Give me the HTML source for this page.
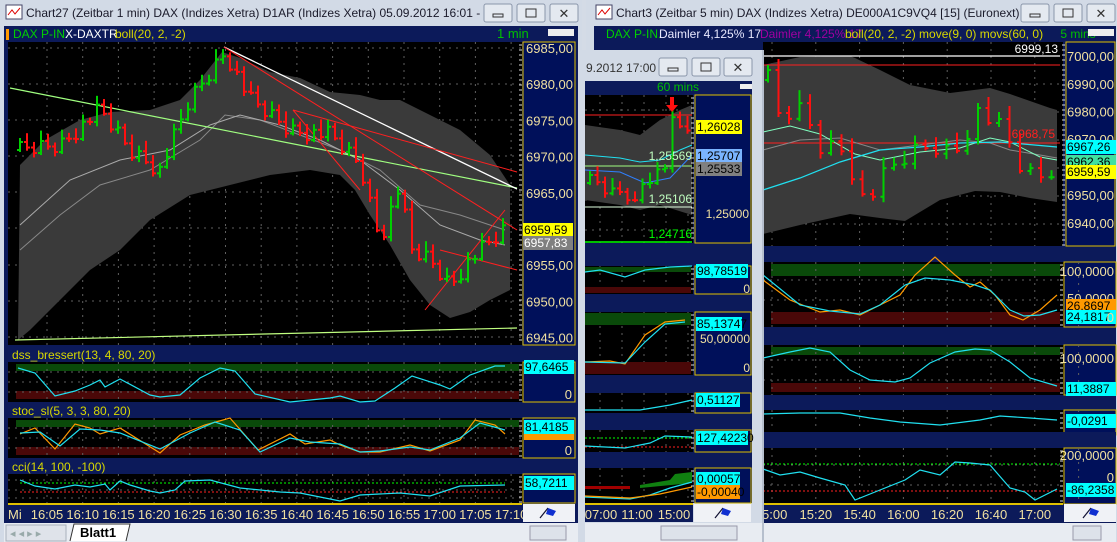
<!DOCTYPE html>
<html><head><meta charset="utf-8"><style>
html,body{margin:0;padding:0;background:#d4dbe6;width:1117px;height:542px;overflow:hidden}
svg{display:block}
text{font-family:"Liberation Sans",sans-serif}
</style></head><body>
<svg id="s" width="1117" height="542" xmlns="http://www.w3.org/2000/svg"></svg>
<script>
var o='';
function R(x,y,w,h,f,extra){o+='<rect x="'+x+'" y="'+y+'" width="'+w+'" height="'+h+'" fill="'+f+'" '+(extra||'')+'/>';}
function T(x,y,t,c,s,a){o+='<text x="'+x+'" y="'+y+'" fill="'+c+'" font-size="'+(s||12)+'"'+(a?' text-anchor="'+a+'"':'')+'>'+t+'</text>';}
function P(pts,c,w,extra){o+='<polyline fill="none" stroke="'+c+'" stroke-width="'+(w||1)+'" points="'+pts.map(function(p){return p.join(',')}).join(' ')+'" '+(extra||'')+'/>';}
function G(pts,f){o+='<polygon fill="'+f+'" points="'+pts.map(function(p){return p.join(',')}).join(' ')+'"/>';}
function Ln(x1,y1,x2,y2,c,w,extra){o+='<line x1="'+x1+'" y1="'+y1+'" x2="'+x2+'" y2="'+y2+'" stroke="'+c+'" stroke-width="'+(w||1)+'" '+(extra||'')+'/>';}
function interp(k,x){for(var i=0;i<k.length-1;i++){if(x>=k[i][0]&&x<=k[i+1][0]){var t=(x-k[i][0])/(k[i+1][0]-k[i][0]);return k[i][1]+t*(k[i+1][1]-k[i][1]);}}return k[k.length-1][1];}
function candles(k,x0,x1,step,amp){var prev=interp(k,x0);var n=0;for(var x=x0;x<=x1;x+=step){var c=interp(k,x)+((n*37)%11-5)*amp*0.4;var col=c<prev?'#00d000':'#ff1010';var hi=Math.min(c,prev)-amp*(1+(n*13)%5*0.4),lo=Math.max(c,prev)+amp*(0.5+(n*7)%3*0.3);Ln(x,hi,x,lo,col,2);Ln(x-3,prev,x,prev,col,2);Ln(x,c,x+3,c,col,2);prev=c;n++;}}
function title(x,w,y,txt){R(x,y,w,25,'#d2dae6');T(x+26,y+17,txt,'#1a1a2a',12);
 o+='<g><rect x="'+(x+6)+'" y="'+(y+5)+'" width="16" height="14" fill="#fff" stroke="#446" /><polyline points="'+(x+8)+','+(y+15)+' '+(x+12)+','+(y+10)+' '+(x+15)+','+(y+14)+' '+(x+20)+','+(y+8)+'" stroke="#d00" fill="none"/></g>';
 var bx=[x+w-96,x+w-63,x+w-30];for(var i=0;i<3;i++){R(bx[i],y+4,28,18,'#e4e9f0','stroke="#8a96aa" rx="2"');}
 R(bx[0]+9,y+14,10,3,'none','stroke="#333"');R(bx[1]+9,y+9,10,8,'none','stroke="#333"');T(bx[2]+14,y+18,'✕','#333',13,'middle');}
function grid(x0,x1,y0,y1,xs,ys){for(var i=0;i<xs.length;i++)Ln(xs[i],y0,xs[i],y1,'#606060',1,'stroke-dasharray="2,5"');for(var j=0;j<ys.length;j++)Ln(x0,ys[j],x1,ys[j],'#606060',1,'stroke-dasharray="2,5"');}
function axis(x,y,w,h){R(x,y,w,h,'#00105a','stroke="#e0c000" stroke-width="1"');for(var yy=y+3;yy<y+h;yy+=5)Ln(x-4,yy,x-1,yy,'#ddd');}
function lbl(x,y,w,t,bg,c){R(x,y-11,w,14,bg);T(x+1,y,t,c||'#000',12);}
var NAV='#0c1a5a',BG='#000';

/* ===== LEFT WINDOW ===== */
R(0,0,582,542,'#d2dae6');
title(0,580,0,'Chart27 (Zeitbar 1 min)  DAX (Indizes Xetra) D1AR (Indizes Xetra) 05.09.2012 16:01 - 0...');
R(4,26,574,497,NAV);
R(6,29,3,11,'#ff9900');
T(13,38,'DAX P-IN.','#00d000',12);T(65,38,'X-DAXTR','#ffffff',12);T(115,38,'boll(20, 2, -2)','#d8d800',12);T(497,38,'1 min','#00c000',13);
R(548,29,26,7,'#eee');
R(8,42,514,303,BG);
var lx=[];for(var t=0;t<14;t++)lx.push(47+t*35.7);
grid(8,522,42,345,lx,[48,84,120,156,192,228,265,301,337]);
G([[20,165],[45,140],[80,120],[110,112],[150,110],[180,100],[200,80],[222,52],[240,58],[270,72],[300,78],[330,92],[360,95],[380,100],[400,100],[430,115],[460,130],[490,155],[510,185],[510,290],[490,300],[470,312],[450,318],[430,305],[410,280],[390,245],[370,215],[355,190],[340,175],[310,170],[270,175],[230,185],[190,195],[150,220],[120,250],[90,270],[60,300],[30,330],[18,340]],'#3a3a3a');
P([[20,250],[60,215],[100,185],[150,170],[200,140],[225,115],[260,120],[300,135],[340,150],[380,170],[420,205],[460,215],[505,230]],'#888',1);
P([[20,225],[70,180],[120,160],[170,150],[210,125],[240,115],[280,125],[320,140],[360,160],[400,190],[440,225],[480,240],[505,245]],'#aaa',1);
Ln(10,88,517,188,'#a0ff80',1.2);
Ln(224,47,517,189,'#ffffff',1.3);
Ln(224,47,517,230,'#ff2020',1);Ln(293,110,517,172,'#ff2020',1);Ln(293,110,360,190,'#ff2020',1);
Ln(425,310,505,210,'#ff2020',1);Ln(440,250,517,270,'#ff2020',1);
Ln(15,340,517,328,'#c0ff80',1.2);
candles([[20,150],[60,145],[100,110],[130,150],[160,170],[190,100],[225,52],[250,100],[290,130],[330,135],[360,165],[380,240],[400,185],[410,250],[430,260],[450,285],[470,260],[505,230]],20,505,7,4);
axis(523,42,52,303);
var lp=['6985,00','6980,00','6975,00','6970,00','6965,00','6960,00','6955,00','6950,00','6945,00'];
for(var i=0;i<9;i++)if(i!=5)T(573,53+i*36.2,lp[i],'#f0e0a0',13,'end');
lbl(523,234,50,'6959,59','#ffff00');lbl(523,247,50,'6957,83','#808080','#fff');
function sub(x0,x1,ax,yh,yp,h,name,bands){R(x0,yh,ax+52-x0,yp-yh,NAV);if(name)T(x0+4,yh+12,name,'#d8d800',12);R(x0,yp,ax-x0,h,BG);if(bands){R(x0+8,yp+2,ax-x0-12,bands[0],'#0a4a0a');R(x0+8,yp+h-bands[1]-3,ax-x0-12,bands[1],'#4a0808');}axis(ax,yp,52,h);}
sub(8,522,523,347,362,40,'dss_bressert(13, 4, 80, 20)',[7,8]);
grid(8,522,362,402,lx,[372,382,392]);
P([[18,368],[35,373],[55,396],[75,391],[90,385],[100,380],[105,387],[120,379],[150,395],[160,397],[180,395],[200,378],[220,368],[235,371],[255,394],[290,402],[330,398],[340,396],[360,402],[375,401],[395,388],[412,376],[440,385],[450,389],[470,375],[495,366],[505,366]],'#20e0f0',1.2);
lbl(524,371,50,'97,6465','#00ffff');T(572,399,'0','#f0e0a0',13,'end');
sub(8,522,523,403,418,40,'stoc_sl(5, 3, 3, 80, 20)',[7,8]);
grid(8,522,418,458,lx,[428,438,448]);
P([[20,434],[35,428],[55,449],[75,424],[90,428],[100,434],[120,428],[160,453],[180,435],[205,425],[230,418],[258,450],[290,434],[305,444],[330,440],[340,445],[360,452],[380,452],[410,445],[430,451],[460,440],[475,420],[495,425],[505,434]],'#ff9900',1.2);
P([[20,433],[40,432],[60,446],[80,429],[100,430],[120,433],[160,449],[190,433],[215,422],[240,430],[260,452],[290,438],[310,442],[340,444],[360,452],[380,451],[410,447],[430,450],[460,438],[480,423],[505,430]],'#20e0f0',1.2);
R(524,432,50,8,'#ff9900');lbl(524,431,50,'81,4185','#00ffff');T(572,455,'0','#f0e0a0',13,'end');
sub(8,522,523,459,474,29,'cci(14, 100, -100)',null);
grid(8,522,474,503,lx,[480,490,498]);
Ln(20,483,505,483,'#00ff00',1,'stroke-dasharray="2,2"');Ln(20,492,505,492,'#ff2020',1,'stroke-dasharray="2,2"');
P([[20,480],[35,486],[55,489],[75,485],[90,487],[105,484],[110,490],[120,481],[130,485],[150,491],[160,493],[175,490],[185,481],[210,480],[240,488],[280,492],[300,493],[320,497],[340,501],[360,495],[400,493],[430,496],[460,486],[505,485]],'#20e0f0',1.2);
lbl(524,487,50,'58,7211','#00ffff');
R(8,504,514,18,NAV);Ln(8,504,522,504,'#e0c000',2);
T(8,519,'Mi','#f0e0a0',13);var lt=['16:05','16:10','16:15','16:20','16:25','16:30','16:35','16:40','16:45','16:50','16:55','17:00','17:05','17:10'];
for(i=0;i<14;i++)T(lx[i],519,lt[i],'#f0e0a0',13,'middle');
R(523,504,52,18,'#f0f2f6');
function flag(x,y){Ln(x,y+10,x+8,y,'#113',1.2);G([[x+8,y],[x+16,y+3],[x+13,y+8],[x+6,y+6]],'#1030d0');}
flag(540,508);
R(4,523,574,19,'#e8ecf2');R(6,525,60,16,'#dfe3ea','stroke="#a8b0bc"');T(10,537,'◂ ◂ ▸ ▸','#9aa',11);
G([[70,541],[74,524],[130,524],[126,541]],'#fff');o+='<polyline points="70,541 74,524 130,524 126,541" fill="none" stroke="#333"/>';
o+='<text x="80" y="537" font-size="13" font-weight="bold" fill="#000" font-family="Liberation Sans">Blatt1</text>';
R(530,526,36,14,'#dde2ea','stroke="#99a"');

/* ===== RIGHT WINDOW ===== */
R(586,0,531,542,'#d2dae6');
title(590,527,0,'Chart3 (Zeitbar 5 min)  DAX (Indizes Xetra) DE000A1C9VQ4 [15] (Euronext)...');
R(594,26,522,497,NAV);
T(606,38,'DAX P-IN.','#00d000',12);T(659,38,'Daimler  4,125% 17','#e8e8ff',12);T(760,38,'Daimler  4,125% 17','#a000a0',12);T(845,38,'boll(20, 2, -2) move(9, 0) movs(60, 0)','#d8d800',12);T(1078,38,'5 mins','#00c000',12,'middle');
R(1088,29,26,7,'#eee');
R(763,42,300,204,BG);
var rx=[];for(t=0;t<9;t++)rx.push(772+t*43.8);
grid(763,1063,42,246,rx,[56,84,112,140,168,196,224]);
G([[763,65],[800,57],[850,56],[855,58],[880,70],[910,85],[950,93],[990,88],[1010,94],[1050,108],[1057,110],[1057,202],[1030,198],[1000,192],[975,191],[940,200],[905,221],[880,218],[850,214],[800,225],[763,234]],'#3a3a3a');
Ln(763,56,1060,56,'#fff',1.3);Ln(763,65,1060,65,'#ff2020',1);Ln(763,143,1060,143,'#ff2020',1);
T(1058,53,'6999,13','#fff',12,'end');T(1055,138,'6968,75','#ff2020',12,'end');
P([[763,150],[800,140],[840,138],[880,150],[920,145],[960,140],[990,143],[1010,150],[1040,155],[1057,158]],'#888',1);
P([[763,132],[790,126],[820,134],[855,154],[880,160],[920,152],[960,148],[990,138],[1010,142],[1040,157],[1057,160]],'#80ffc0',1);
P([[763,190],[800,178],[840,162],[880,150],[920,147],[960,143],[1000,142],[1057,147]],'#20e0f0',1.2);
candles([[768,80],[780,120],[795,108],[805,115],[820,145],[845,150],[865,205],[880,182],[900,160],[920,150],[935,145],[945,152],[960,148],[975,110],[990,120],[1000,130],[1010,145],[1025,175],[1040,178],[1057,165]],768,1055,10.5,5);
axis(1066,42,49,204);
var rp=['7000,00','6990,00','6980,00','6970,00','6960,00','6950,00','6940,00'];
for(i=0;i<7;i++)if(i!=4&&i!=3)T(1114,61+i*27.8,rp[i],'#f0e0a0',13,'end');
T(1114,144,'6970,00','#f0e0a0',13,'end');
lbl(1066,151,50,'6967,26','#00ffff');lbl(1066,166,50,'6962,36','#40e0a0');lbl(1066,176,50,'6959,59','#ffff00');
sub(763,1063,1064,248,262,65,null,[12,12]);
grid(763,1063,262,327,rx,[280,300]);
P([[763,280],[790,300],[820,312],[840,310],[860,315],[880,305],[900,295],[915,275],[935,257],[955,275],[970,287],[980,282],[995,295],[1010,315],[1023,320],[1040,310],[1057,295]],'#ff9900',1.2);
P([[763,275],[800,305],[830,311],[860,314],[880,305],[905,285],[925,278],[950,280],[975,285],[990,290],[1010,310],[1024,316],[1040,315],[1057,310]],'#20e0f0',1.2);
T(1114,276,'100,0000','#f0e0a0',13,'end');T(1114,303,'50,0000','#f0e0a0',13,'end');lbl(1066,310,50,'26,8697','#ff9900');lbl(1066,321,50,'24,1817','#00ffff');T(1114,322,'0','#f0e0a0',13,'end');
sub(763,1063,1064,328,345,50,null,[8,9]);
grid(763,1063,345,395,rx,[360,380]);
P([[763,358],[790,352],[810,348],[830,352],[850,370],[870,380],[895,382],[910,378],[930,363],[955,352],[975,349],[990,350],[1010,362],[1030,378],[1057,386]],'#20e0f0',1.2);
T(1114,363,'100,0000','#f0e0a0',13,'end');lbl(1066,393,50,'11,3887','#00ffff');
sub(763,1063,1064,396,410,25,null,null);
grid(763,1063,410,430,rx,[]);
P([[763,414],[800,413],[840,413],[870,418],[900,422],[940,425],[980,420],[1000,416],[1030,418],[1057,420]],'#20e0f0',1.2);
lbl(1066,425,50,'-0,0291','#00ffff');
sub(763,1063,1064,432,448,56,null,null);
grid(763,1063,448,503,rx,[465,485]);
Ln(763,464,1060,464,'#00ff00',1,'stroke-dasharray="2,2"');Ln(763,491,1060,491,'#ff2020',1,'stroke-dasharray="2,2"');
P([[763,469],[780,475],[800,472],[820,478],[845,485],[855,500],[880,490],[905,480],[920,470],[940,475],[955,462],[970,463],[990,465],[1010,488],[1025,492],[1035,500],[1057,489]],'#20e0f0',1.2);
T(1114,460,'200,0000','#f0e0a0',13,'end');T(1114,482,'0','#f0e0a0',13,'end');lbl(1066,494,50,'-86,2358','#00ffff');
R(763,504,300,18,NAV);Ln(763,504,1063,504,'#e0c000',2);
var rt=['5:00','15:20','15:40','16:00','16:20','16:40','17:00'];
T(762,519,rt[0],'#f0e0a0',13);for(i=1;i<7;i++)T(772+i*43.8,519,rt[i],'#f0e0a0',13,'middle');
R(1064,504,52,18,'#f0f2f6');flag(1083,508);
R(594,523,522,19,'#e8ecf2');R(1073,526,28,14,'#dde2ea','stroke="#99a"');

/* ===== MIDDLE WINDOW ===== */
R(582,50,182,492,'#d2dae6');Ln(763,50,763,542,'#9aa4b4',1);
T(586,72,'9.2012 17:00','#333',12);
var mb=[659,692,724];for(i=0;i<3;i++)R(mb[i],58,28,18,'#e4e9f0','stroke="#8a96aa" rx="2"');
R(668,68,10,3,'none','stroke="#333"');R(701,63,10,8,'none','stroke="#333"');T(738,72,'✕','#333',13,'middle');
R(585,81,167,422,NAV);
T(678,91,'60 mins','#00c000',12,'middle');R(740,84,12,5,'#eee');
R(585,95,108,148,BG);
var mx=[600,622,644,666,688];grid(585,693,95,243,mx,[110,140,170,200,230]);
G([[585,125],[620,130],[640,135],[660,120],[680,110],[692,105],[692,215],[660,205],[640,210],[620,205],[585,200]],'#3a3a3a');
Ln(585,115,692,115,'#ff2020',1);Ln(585,166,692,166,'#a0ff80',1);Ln(585,207,692,207,'#e0ffe0',1);Ln(585,242,692,242,'#00ff00',1.5);
P([[585,155],[620,158],[640,162],[660,160],[680,150],[692,145]],'#20e0f0',1);
P([[585,170],[620,172],[645,183],[670,178],[692,155]],'#3080ff',1);
candles([[590,183],[600,184],[612,195],[625,190],[635,205],[645,175],[655,175],[665,165],[672,125],[680,128],[690,125]],590,690,7.5,4);
G([[670,97],[674,97],[674,105],[678,105],[672,112],[666,105],[670,105]],'#ff1010');
T(692,160,'1,25569','#c0ffc0',12,'end');T(692,203,'1,25106','#c0ffc0',12,'end');T(692,238,'1,24716','#00ff00',12,'end');
axis(695,95,56,148);
lbl(696,131,46,'1,26028','#ffff00');lbl(696,160,46,'1,25707','#7ab4ff');lbl(696,173,46,'1,25533','#808080');T(749,218,'1,25000','#f0e0a0',12,'end');
function msub(yp,h,bands){R(585,yp,108,h,BG);grid(585,693,yp,yp+h,mx,[]);if(bands){R(585,yp+1,106,bands[0],'#0a4a0a');R(585,yp+h-bands[1]-1,106,bands[1],'#4a0808');}axis(695,yp,56,h);}
msub(266,28,[5,6]);P([[585,272],[600,270],[625,277],[645,270],[670,267],[692,266]],'#20e0f0',1.2);lbl(696,275,52,'98,78519','#00ffff');T(750,293,'0','#f0e0a0',12,'end');
msub(312,63,[12,12]);P([[585,362],[610,361],[625,364],[645,335],[665,322],[685,320]],'#ff9900',1.2);P([[585,362],[625,363],[645,342],[665,324],[685,322]],'#20e0f0',1.2);lbl(696,328,46,'85,13747','#00ffff');T(750,343,'50,00000','#f0e0a0',12,'end');T(750,372,'0','#f0e0a0',12,'end');
msub(393,20,null);P([[585,410],[640,410],[670,405],[692,400]],'#20e0f0',1.2);lbl(696,404,44,'0,51127','#00ffff');
msub(430,22,null);Ln(585,438,692,438,'#00ff00',1,'stroke-dasharray="2,2"');Ln(585,447,692,447,'#ff2020',1,'stroke-dasharray="2,2"');P([[585,446],[625,448],[650,443],[665,436],[692,437]],'#20e0f0',1.2);lbl(696,442,52,'127,42230','#00ffff');
msub(468,35,null);R(585,486,45,3,'#a00000');G([[640,485],[670,480],[675,474],[692,472],[692,483],[640,488]],'#108010');P([[585,497],[630,499],[650,495],[670,488],[692,482]],'#20e0f0',1.2);P([[585,496],[630,498],[660,494],[692,487]],'#ff9900',1.2);
lbl(696,483,44,'0,00057','#00ffff');lbl(696,496,44,'-0,00040','#ff9900');
R(585,504,108,18,NAV);Ln(585,504,693,504,'#e0c000',2);T(601,519,'07:00','#f0e0a0',13,'middle');T(637,519,'11:00','#f0e0a0',13,'middle');T(674,519,'15:00','#f0e0a0',13,'middle');
R(694,504,57,18,'#f0f2f6');flag(715,508);
R(585,523,177,19,'#e8ecf2');R(661,526,76,14,'#dde2ea','stroke="#99a"');
document.getElementById('s').innerHTML=o;
</script>
</body></html>
